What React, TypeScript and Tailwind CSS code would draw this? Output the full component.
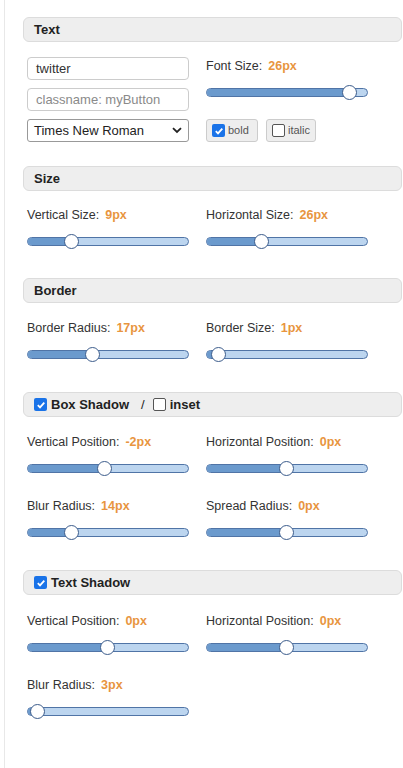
import React from "react";

const font = { fontFamily: '"Liberation Sans", Arial, sans-serif' };

function Slider({ pos }: { pos: number }) {
  return (
    <div className="relative h-[15px] w-[162px] flex items-center">
      <div className="relative h-[9px] w-full rounded-full border border-[#5074a6] bg-[#bcd5ef] overflow-hidden">
        <div className="absolute left-0 top-0 h-full bg-[#6b9acd]" style={{ width: pos }} />
      </div>
      <div
        className="absolute top-0 h-[15px] w-[15px] rounded-full border border-[#3d5d8c] bg-white"
        style={{ left: pos - 7.5 }}
      />
    </div>
  );
}

function Field({ label, value, pos }: { label: string; value: string; pos: number }) {
  return (
    <div className="flex flex-col">
      <div className="flex items-center h-[16px] text-[12.5px] text-[#333]">
        <span>{label}</span>
        <span className="ml-[6px] font-bold text-[#e8953f]">{value}</span>
      </div>
      <div className="mt-[11px]">
        <Slider pos={pos} />
      </div>
    </div>
  );
}

function Check({ checked }: { checked: boolean }) {
  return checked ? (
    <span className="inline-flex h-[13px] w-[13px] items-center justify-center rounded-[2px] bg-[#1a73e8]">
      <svg width="10" height="10" viewBox="0 0 10 10">
        <path d="M1.8 5.2 L4 7.4 L8.3 2.6" fill="none" stroke="white" strokeWidth="1.8" />
      </svg>
    </span>
  ) : (
    <span className="inline-block h-[13px] w-[13px] rounded-[2px] border border-[#555] bg-white" />
  );
}

function Header({ children }: { children: React.ReactNode }) {
  return (
    <div className="flex h-[25px] items-center rounded-[6px] border border-[#dcdcdc] bg-[#eeeeee] pl-[10px] text-[13px] font-bold text-[#222]">
      {children}
    </div>
  );
}

function Grid({ children }: { children: React.ReactNode }) {
  return <div className="ml-[4px] grid grid-cols-[162px_162px] gap-x-[17px] gap-y-[22px]">{children}</div>;
}

export default function App() {
  return (
    <div className="min-h-screen bg-white" style={font}>
      <div className="ml-[4px] min-h-screen border-l border-[#e8e8e8] pl-[18px] pr-[1px] pt-[17px] pb-[40px]">
        {/* Text */}
        <Header>Text</Header>
        <div className="ml-[4px] mt-[15px] grid grid-cols-[162px_162px] gap-x-[17px]">
          <div className="flex flex-col gap-[8px]">
            <div className="flex h-[23px] items-center rounded-[4px] border border-[#cccccc] pl-[8px] text-[13px] text-[#333]">
              twitter
            </div>
            <div className="flex h-[23px] items-center rounded-[4px] border border-[#cccccc] pl-[8px] text-[13px] text-[#8a8a8a]">
              classname: myButton
            </div>
            <div className="flex h-[23px] items-center justify-between rounded-[3px] border border-[#999] pl-[6px] pr-[6px] text-[13px] text-[#222]">
              <span>Times New Roman</span>
              <svg width="10" height="7" viewBox="0 0 10 7">
                <path d="M1 1.2 L5 5 L9 1.2" fill="none" stroke="#222" strokeWidth="1.8" />
              </svg>
            </div>
          </div>
          <div className="flex flex-col pt-[1px]">
            <Field label="Font Size:" value="26px" pos={143} />
            <div className="mt-[19px] flex gap-[8px]">
              <div className="flex h-[23px] w-[52px] items-center gap-[3px] rounded-[3px] border border-[#cccccc] bg-[#eeeeee] pl-[5px] text-[11px] text-[#555]">
                <Check checked />
                <span>bold</span>
              </div>
              <div className="flex h-[23px] w-[50px] items-center gap-[3px] rounded-[3px] border border-[#cccccc] bg-[#eeeeee] pl-[5px] text-[11px] text-[#555]">
                <Check checked={false} />
                <span>italic</span>
              </div>
            </div>
          </div>
        </div>

        {/* Size */}
        <div className="mt-[24px]">
          <Header>Size</Header>
        </div>
        <div className="mt-[16px]">
          <Grid>
            <Field label="Vertical Size:" value="9px" pos={44} />
            <Field label="Horizontal Size:" value="26px" pos={55} />
          </Grid>
        </div>

        {/* Border */}
        <div className="mt-[29px]">
          <Header>Border</Header>
        </div>
        <div className="mt-[17px]">
          <Grid>
            <Field label="Border Radius:" value="17px" pos={65} />
            <Field label="Border Size:" value="1px" pos={12} />
          </Grid>
        </div>

        {/* Box Shadow */}
        <div className="mt-[30px]">
          <Header>
            <span className="flex items-center gap-[4px]">
              <Check checked />
              <span>Box Shadow</span>
              <span className="ml-[8px] font-normal">/</span>
              <span className="ml-[4px] flex items-center gap-[4px]">
                <Check checked={false} />
                <span>inset</span>
              </span>
            </span>
          </Header>
        </div>
        <div className="mt-[17px]">
          <Grid>
            <Field label="Vertical Position:" value="-2px" pos={77} />
            <Field label="Horizontal Position:" value="0px" pos={80} />
            <Field label="Blur Radius:" value="14px" pos={44} />
            <Field label="Spread Radius:" value="0px" pos={80} />
          </Grid>
        </div>

        {/* Text Shadow */}
        <div className="mt-[30px]">
          <Header>
            <span className="flex items-center gap-[4px]">
              <Check checked />
              <span>Text Shadow</span>
            </span>
          </Header>
        </div>
        <div className="mt-[18px]">
          <Grid>
            <Field label="Vertical Position:" value="0px" pos={80} />
            <Field label="Horizontal Position:" value="0px" pos={80} />
            <Field label="Blur Radius:" value="3px" pos={10} />
          </Grid>
        </div>
      </div>
    </div>
  );
}
